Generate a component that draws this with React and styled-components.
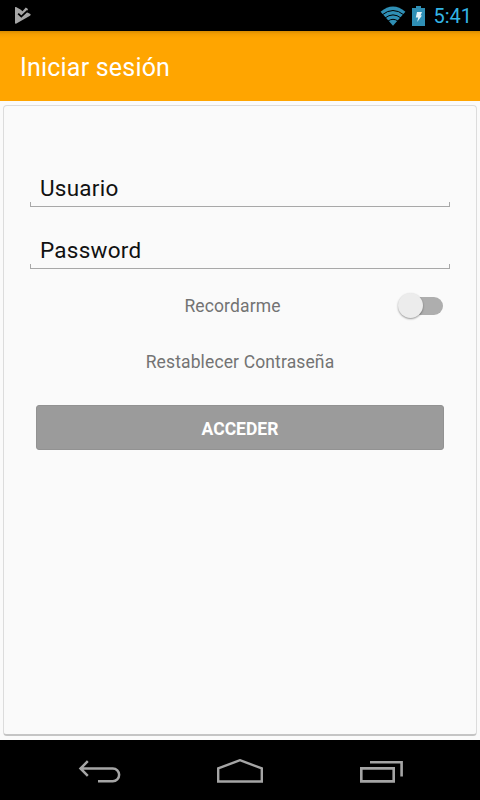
import React, { useState } from 'react';
import styled, { createGlobalStyle } from 'styled-components';

const App = () => {
  const [username, setUsername] = useState('Usuario');
  const [password, setPassword] = useState('Password');
  const [remember, setRemember] = useState(false);

  return (
    <Screen>
      <GlobalStyle />
      <StatusBar>
        <StoreIcon />
        <StatusIcons>
          <WifiIcon />
          <BatteryIcon />
          <Clock>5:41</Clock>
        </StatusIcons>
      </StatusBar>

      <Header>
        <Title>Iniciar sesión</Title>
      </Header>

      <Content>
        <Card>
          <Field>
            <Input
              aria-label="Usuario"
              value={username}
              onChange={(e) => setUsername(e.target.value)}
            />
          </Field>
          <Field>
            <Input
              aria-label="Password"
              value={password}
              onChange={(e) => setPassword(e.target.value)}
            />
          </Field>

          <RememberRow>
            <Label>Recordarme</Label>
            <Switch
              role="switch"
              aria-checked={remember}
              onClick={() => setRemember(!remember)}
            >
              <Thumb $on={remember} />
            </Switch>
          </RememberRow>

          <ResetLink>Restablecer Contraseña</ResetLink>
          <SubmitButton>ACCEDER</SubmitButton>
        </Card>
      </Content>

      <NavBar>
        <BackIcon />
        <HomeIcon />
        <RecentsIcon />
      </NavBar>
    </Screen>
  );
};

export default App;

const StoreIcon = () => (
  <svg width="18" height="19" viewBox="0 0 18 19">
    <path
      d="M1 1.6Q1 .6 2 1L6.5 3.4L8.5 5.2L11.8 1.4L14 3L12.8 6.2L16 7.8Q17.6 8.6 16 9.8L2.4 17.6Q1 18.2 1 16.8Z"
      fill="#a6a6a6"
    />
    <path d="M4.2 7.6L7.3 10.6L13.6 4.6" fill="none" stroke="#000" strokeWidth="1.8" />
  </svg>
);

const WifiIcon = () => (
  <svg width="26" height="20" viewBox="0 0 26 20">
    <path d="M.6 5.8Q13 -5 25.4 5.8L13 19.8Z" fill="#2f8fb5" />
    <g fill="none" stroke="#000" strokeWidth="1">
      <path d="M2.2 8.8Q13 .2 23.8 8.8" />
      <path d="M5 12Q13 5.8 21 12" />
      <path d="M7.8 15.2Q13 11.4 18.2 15.2" />
    </g>
  </svg>
);

const BatteryIcon = () => (
  <svg width="13" height="20" viewBox="0 0 13 20">
    <path d="M4 0H9V2H13V20H0V2H4Z" fill="#2f8fb5" />
    <path d="M5 6H10L8.5 9.6H10L5.2 16L6.2 11.4H3.8Z" fill="#e6f4f8" />
  </svg>
);

const BackIcon = () => (
  <svg width="44" height="26" viewBox="0 0 44 26">
    <path
      d="M3 9.5H34.8A6.3 6.3 0 0 1 34.8 22.2H20M9.8 2.2L2.5 9.5L9.8 16.8"
      fill="none"
      stroke="#a5a5a5"
      strokeWidth="2.5"
    />
  </svg>
);

const HomeIcon = () => (
  <svg width="46" height="26" viewBox="0 0 46 26">
    <path d="M1.2 9.4L23 1.2L44.8 9.4V22.5H1.2Z" fill="none" stroke="#a5a5a5" strokeWidth="2.4" />
  </svg>
);

const RecentsIcon = () => (
  <svg width="44" height="26" viewBox="0 0 44 26">
    <path d="M1.3 9.4H33.7V22.4H1.3ZM10 3.2H41.6V17.6" fill="none" stroke="#a5a5a5" strokeWidth="2.6" />
  </svg>
);

const GlobalStyle = createGlobalStyle`
  * {
    box-sizing: border-box;
  }

  body {
    margin: 0;
    font-family: Roboto, sans-serif;
  }

  svg {
    display: block;
    flex-shrink: 0;
  }
`;

const Screen = styled.div`
  display: flex;
  flex-direction: column;
  width: 480px;
  height: 800px;
  overflow: hidden;
  background: #fafafa;
`;

const StatusBar = styled.div`
  display: flex;
  align-items: center;
  justify-content: space-between;
  height: 31px;
  padding: 0 8px 0 14px;
  background: #000;
`;

const StatusIcons = styled.div`
  display: flex;
  align-items: center;
  gap: 6px;
`;

const Clock = styled.span`
  margin-left: 2px;
  padding-top: 1px;
  color: #33b5e5;
  font-size: 20px;
  line-height: 31px;
`;

const Header = styled.header`
  display: flex;
  align-items: center;
  height: 70px;
  padding: 3px 20px 0;
  background: linear-gradient(#d98c00 0, #f59e00 3px, #ffa500 7px);
`;

const Title = styled.h1`
  margin: 0;
  color: #fff;
  font-size: 25px;
  font-weight: 400;
  letter-spacing: 0.2px;
`;

const Content = styled.main`
  display: flex;
  flex: 1;
  padding: 4px 3px;
`;

const Card = styled.section`
  flex: 1;
  padding: 63px 26px 0;
  border: 1px solid #dcdcdc;
  border-bottom: 2px solid #c4c4c4;
  border-radius: 4px;
`;

const Field = styled.div`
  height: 38px;
  margin-bottom: 24px;
  background:
    linear-gradient(#a8a8a8, #a8a8a8) left bottom / 1px 4px no-repeat,
    linear-gradient(#a8a8a8, #a8a8a8) right bottom / 1px 4px no-repeat;
  border-bottom: 1px solid #a8a8a8;
`;

const Input = styled.input`
  display: block;
  width: 100%;
  height: 38px;
  padding: 0 10px;
  border: 0;
  outline: 0;
  background: transparent;
  color: #111;
  font-family: inherit;
  font-size: 22.5px;
  letter-spacing: 0.25px;
`;

const RememberRow = styled.div`
  display: grid;
  grid-template-columns: 1fr auto 1fr;
  align-items: center;
  height: 26px;
`;

const Label = styled.span`
  grid-column: 2;
  margin-right: 15px;
  color: #737373;
  font-size: 17.5px;
  letter-spacing: 0.13px;
`;

const Switch = styled.button`
  justify-self: end;
  width: 43px;
  height: 18px;
  margin-right: 7px;
  padding: 0;
  border: 0;
  border-radius: 9px;
  background: #aeaeae;
`;

const Thumb = styled.span`
  display: block;
  width: 25px;
  height: 25px;
  margin: ${(props) => (props.$on ? '-4px 0 0 20px' : '-4px 0 0 -2px')};
  border-radius: 50%;
  background: #ececec;
  box-shadow: 0 1px 2px rgba(0, 0, 0, 0.4);
`;

const ResetLink = styled.a`
  display: block;
  margin-top: 33px;
  color: #737373;
  font-size: 17.5px;
  line-height: 20px;
  letter-spacing: 0.13px;
  text-align: center;
`;

const SubmitButton = styled.button`
  display: block;
  width: 408px;
  height: 45px;
  margin: 33px 0 0 6px;
  padding: 2px 0 0;
  border: 1px solid #929292;
  border-radius: 3px;
  background: #9b9b9b;
  color: #fff;
  font-family: inherit;
  font-size: 17.5px;
  font-weight: 700;
`;

const NavBar = styled.nav`
  display: grid;
  grid-template-columns: 139px 143px 44px;
  height: 60px;
  padding: 19px 0 0 78px;
  background: #000;
`;
